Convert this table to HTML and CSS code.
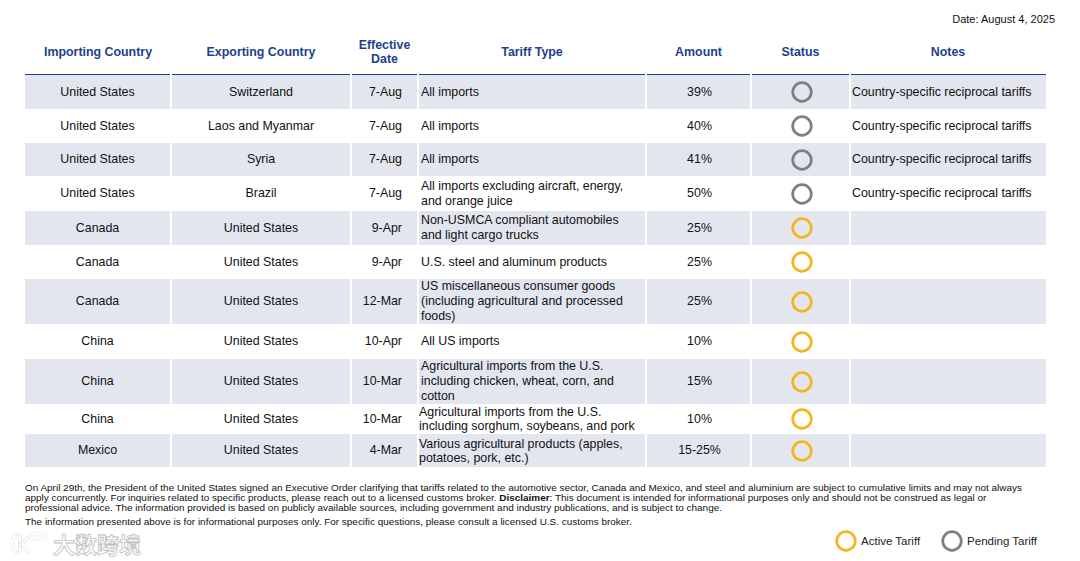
FILE: index.html
```html
<!DOCTYPE html>
<html lang="en">
<head>
<meta charset="utf-8">
<title>Tariff Tracker</title>
<link rel="stylesheet" href="styles.css">
</head>
<body>
<div class="page">
  <div class="date">Date: August 4, 2025</div>
  <table class="tariffs">
    <colgroup>
      <col class="c-imp"><col class="c-exp"><col class="c-date"><col class="c-type"><col class="c-amt"><col class="c-status"><col class="c-notes">
    </colgroup>
    <thead>
      <tr>
        <th>Importing Country</th>
        <th>Exporting Country</th>
        <th>Effective<br>Date</th>
        <th>Tariff Type</th>
        <th>Amount</th>
        <th>Status</th>
        <th>Notes</th>
      </tr>
    </thead>
    <tbody>
      <tr class="shade h34">
        <td class="ctr">United States</td><td class="ctr">Switzerland</td><td class="dt">7-Aug</td><td class="type">All imports</td><td class="ctr">39%</td>
        <td class="ctr"><svg class="dot" viewBox="0 0 22 22"><circle cx="11" cy="11" r="9.3" class="pending"/></svg></td>
        <td class="note">Country-specific reciprocal tariffs</td>
      </tr>
      <tr class="h34">
        <td class="ctr">United States</td><td class="ctr">Laos and Myanmar</td><td class="dt">7-Aug</td><td class="type">All imports</td><td class="ctr">40%</td>
        <td class="ctr"><svg class="dot" viewBox="0 0 22 22"><circle cx="11" cy="11" r="9.3" class="pending"/></svg></td>
        <td class="note">Country-specific reciprocal tariffs</td>
      </tr>
      <tr class="shade h33">
        <td class="ctr">United States</td><td class="ctr">Syria</td><td class="dt">7-Aug</td><td class="type">All imports</td><td class="ctr">41%</td>
        <td class="ctr"><svg class="dot" viewBox="0 0 22 22"><circle cx="11" cy="11" r="9.3" class="pending"/></svg></td>
        <td class="note">Country-specific reciprocal tariffs</td>
      </tr>
      <tr class="h35">
        <td class="ctr">United States</td><td class="ctr">Brazil</td><td class="dt">7-Aug</td><td class="type">All imports excluding aircraft, energy,<br>and orange juice</td><td class="ctr">50%</td>
        <td class="ctr"><svg class="dot" viewBox="0 0 22 22"><circle cx="11" cy="11" r="9.3" class="pending"/></svg></td>
        <td class="note">Country-specific reciprocal tariffs</td>
      </tr>
      <tr class="shade h34">
        <td class="ctr">Canada</td><td class="ctr">United States</td><td class="dt">9-Apr</td><td class="type">Non-USMCA compliant automobiles<br>and light cargo trucks</td><td class="ctr">25%</td>
        <td class="ctr"><svg class="dot" viewBox="0 0 22 22"><circle cx="11" cy="11" r="9.3" class="active"/></svg></td>
        <td class="note"></td>
      </tr>
      <tr class="h34">
        <td class="ctr">Canada</td><td class="ctr">United States</td><td class="dt">9-Apr</td><td class="type">U.S. steel and aluminum products</td><td class="ctr">25%</td>
        <td class="ctr"><svg class="dot" viewBox="0 0 22 22"><circle cx="11" cy="11" r="9.3" class="active"/></svg></td>
        <td class="note"></td>
      </tr>
      <tr class="shade h45">
        <td class="ctr">Canada</td><td class="ctr">United States</td><td class="dt">12-Mar</td><td class="type">US miscellaneous consumer goods<br>(including agricultural and processed<br>foods)</td><td class="ctr">25%</td>
        <td class="ctr"><svg class="dot" viewBox="0 0 22 22"><circle cx="11" cy="11" r="9.3" class="active"/></svg></td>
        <td class="note"></td>
      </tr>
      <tr class="h35">
        <td class="ctr">China</td><td class="ctr">United States</td><td class="dt">10-Apr</td><td class="type">All US imports</td><td class="ctr">10%</td>
        <td class="ctr"><svg class="dot" viewBox="0 0 22 22"><circle cx="11" cy="11" r="9.3" class="active"/></svg></td>
        <td class="note"></td>
      </tr>
      <tr class="shade h45">
        <td class="ctr">China</td><td class="ctr">United States</td><td class="dt">10-Mar</td><td class="type">Agricultural imports from the U.S.<br>including chicken, wheat, corn, and<br>cotton</td><td class="ctr">15%</td>
        <td class="ctr"><svg class="dot" viewBox="0 0 22 22"><circle cx="11" cy="11" r="9.3" class="active"/></svg></td>
        <td class="note"></td>
      </tr>
      <tr class="h30">
        <td class="ctr">China</td><td class="ctr">United States</td><td class="dt">10-Mar</td><td class="type tight">Agricultural imports from the U.S.<br>including sorghum, soybeans, and pork</td><td class="ctr">10%</td>
        <td class="ctr"><svg class="dot" viewBox="0 0 22 22"><circle cx="11" cy="11" r="9.3" class="active"/></svg></td>
        <td class="note"></td>
      </tr>
      <tr class="shade h33">
        <td class="ctr">Mexico</td><td class="ctr">United States</td><td class="dt">4-Mar</td><td class="type tight">Various agricultural products (apples,<br>potatoes, pork, etc.)</td><td class="ctr">15-25%</td>
        <td class="ctr"><svg class="dot" viewBox="0 0 22 22"><circle cx="11" cy="11" r="9.3" class="active"/></svg></td>
        <td class="note"></td>
      </tr>
    </tbody>
  </table>

  <div class="footnote">
    <p>On April 29th, the President of the United States signed an Executive Order clarifying that tariffs related to the automotive sector, Canada and Mexico, and steel and aluminium are subject to cumulative limits and may not always<br>apply concurrently. For inquiries related to specific products, please reach out to a licensed customs broker. <b>Disclaimer</b>: This document is intended for informational purposes only and should not be construed as legal or<br>professional advice. The information provided is based on publicly available sources, including government and industry publications, and is subject to change.</p>
    <p class="second">The information presented above is for informational purposes only. For specific questions, please consult a licensed U.S. customs broker.</p>
  </div>

  <div class="legend">
    <div class="legend-item"><svg class="dot" viewBox="0 0 22 22"><circle cx="11" cy="11" r="9.3" class="active"/></svg><span>Active Tariff</span></div>
    <div class="legend-item"><svg class="dot" viewBox="0 0 22 22"><circle cx="11" cy="11" r="9.3" class="pending"/></svg><span>Pending Tariff</span></div>
  </div>

  <div class="watermark">
    <svg class="wm-logo" viewBox="0 0 40 26">
      <path d="M7 5 C2 9 2 18 7 22" />
      <path d="M11 5 L11 22" />
      <path d="M11 15 L19 7" />
      <path d="M13 13 L20 22" />
      <circle cx="24" cy="6" r="3.4" />
      <circle cx="32.5" cy="6" r="3.4" />
    </svg>
    <span class="wm-text">大数跨境</span>
  </div>
</div>
</body>
</html>
```

FILE: styles.css
```css
html, body {
  margin: 0;
  padding: 0;
  background: #ffffff;
}

body {
  font-family: "Liberation Sans", Arial, sans-serif;
  color: #111111;
}

.page {
  position: relative;
  width: 1080px;
  height: 561px;
  box-sizing: border-box;
  padding: 12px 25px 0 25px;
}

.date {
  text-align: right;
  font-size: 11px;
  line-height: 14px;
  color: #111;
}

.tariffs {
  margin-top: 7px;
  width: 1021px;
  border-collapse: collapse;
  table-layout: fixed;
  font-size: 12.4px;
}

.c-imp { width: 146px; }
.c-exp { width: 180px; }
.c-date { width: 67px; }
.c-type { width: 228px; }
.c-amt { width: 105px; }
.c-status { width: 99px; }
.c-notes { width: 196px; }

.tariffs th {
  height: 37px;
  padding: 0 0 4px 0;
  color: #223f8c;
  font-weight: bold;
  font-size: 12.4px;
  line-height: 14px;
  text-align: center;
  vertical-align: middle;
  border-bottom: 1.5px solid #223f8c;
}

.tariffs td {
  padding: 0;
  line-height: 15px;
  vertical-align: middle;
  border-left: 2px solid #ffffff;
  white-space: nowrap;
}

.tariffs td:first-child {
  border-left: none;
}

.shade td {
  background: #e3e6ef;
}

.h30 td { height: 30px; }
.h33 td { height: 33px; }
.h34 td { height: 34px; }
.h35 td { height: 35px; }
.h45 td { height: 45px; }

.ctr {
  text-align: center;
}

.tariffs td.ctr:nth-child(5),
.tariffs td.ctr:nth-child(6) {
  padding-left: 2px;
}

.dt {
  text-align: right;
  padding-right: 15px !important;
}

.type {
  text-align: left;
  padding-left: 2px !important;
}

.type.tight {
  line-height: 14px;
  padding-left: 0 !important;
}

.note {
  text-align: left;
  padding-left: 1px !important;
}

.dot {
  display: block;
  width: 22px;
  height: 22px;
  margin: 0 auto;
}

.dot circle {
  fill: none;
  stroke-width: 2.7;
}

.dot .pending {
  stroke: #7f7f7f;
}

.dot .active {
  stroke: #f4b61c;
}

.footnote {
  margin-top: 16px;
  font-size: 9.95px;
  line-height: 10.2px;
  color: #111;
  white-space: nowrap;
}

.footnote p {
  margin: 0;
}

.footnote p.second {
  margin-top: 3px;
}

.legend {
  display: flex;
  justify-content: flex-end;
  gap: 21px;
  margin-top: 3px;
  padding-right: 18px;
}

.legend-item {
  display: flex;
  align-items: center;
  gap: 4px;
  font-size: 11.5px;
  color: #222;
}

.legend-item .dot {
  margin: 0;
}

.watermark {
  position: absolute;
  left: 9px;
  top: 527px;
  display: flex;
  align-items: center;
  gap: 4px;
}

.wm-logo {
  width: 40px;
  height: 26px;
}

.wm-logo path,
.wm-logo circle {
  fill: none;
  stroke: #ffffff;
  stroke-width: 3;
  stroke-linecap: round;
  filter: drop-shadow(0 0 0.7px #a8a8a8);
}

.wm-text {
  font-family: "Noto Sans CJK SC", sans-serif;
  font-size: 22px;
  font-weight: bold;
  color: #ffffff;
  -webkit-text-stroke: 0.8px #bdbdbd;
  letter-spacing: 0;
}
```
